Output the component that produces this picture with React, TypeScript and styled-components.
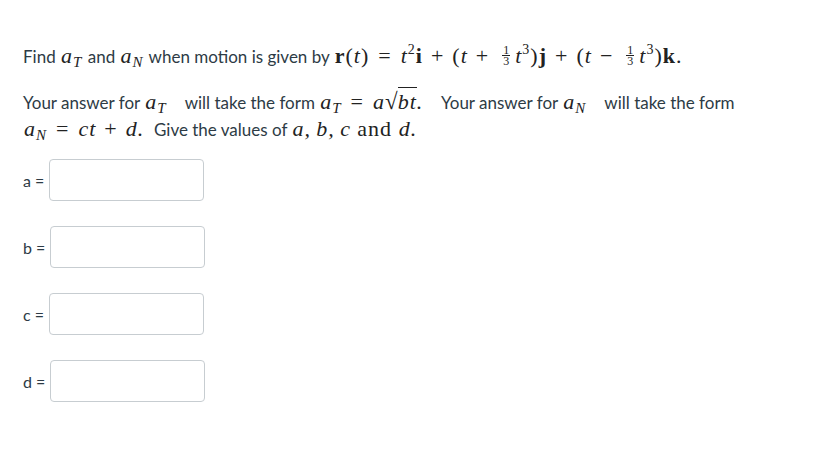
import React from "react";
import styled, { createGlobalStyle } from "styled-components";

const Global = createGlobalStyle`
  html, body { margin: 0; padding: 0; background: #fff; }
  body { font-family: Lato, "Open Sans", sans-serif; color: #2d3b45; }
`;

const Page = styled.div`
  padding: 43px 23px 0 23px;
  width: 790px;
  box-sizing: border-box;
`;

const Para = styled.p<{ $mt?: number }>`
  margin: ${(p) => p.$mt ?? 0}px 0 0 0;
  font-size: 17px;
  line-height: 27px;
  color: #2d3b45;
`;

const M = styled.span`
  font-family: "Liberation Serif", "DejaVu Serif", serif;
  font-size: 22px;
  line-height: 1;
  letter-spacing: 1px;
  font-style: italic;
  color: #222;
  margin: 0 1px;
`;

const R = styled.span`
  font-style: normal;
`;

const B = styled.span`
  font-style: normal;
  font-weight: bold;
`;

const Sub = styled.sub`
  font-size: 15px;
  vertical-align: -4px;
  line-height: 0;
`;

const Sup = styled.sup`
  font-size: 14px;
  vertical-align: 9px;
  line-height: 0;
  font-style: normal;
`;

const Rel = styled.span`
  font-style: normal;
  margin: 0 9px;
`;

const Bin = styled.span`
  font-style: normal;
  margin: 0 8px;
`;

const Frac = styled.span`
  display: inline-block;
  vertical-align: middle;
  text-align: center;
  font-style: normal;
  font-size: 12px;
  line-height: 10px;
  letter-spacing: 0;
  margin: -4px 5px 0 5px;
`;

const FracPart = styled.span<{ $bar?: boolean }>`
  display: block;
  padding: 0 1px;
  border-top: ${(p) => (p.$bar ? "1px solid #222" : "none")};
`;

const Sqrt = styled.span`
  font-style: normal;
  font-size: 23px;
  letter-spacing: 0;
`;

const Over = styled.span`
  border-top: 1px solid #222;
  padding-top: 1px;
  font-style: italic;
`;

const Fields = styled.div`
  display: flex;
  flex-direction: column;
  gap: 25px;
  margin-top: 16px;
`;

const Row = styled.div`
  display: flex;
  align-items: center;
  gap: 5px;
`;

const Label = styled.label`
  font-size: 16px;
  color: #2d3b45;
`;

const Input = styled.input`
  width: 155px;
  height: 42px;
  box-sizing: border-box;
  border: 1px solid #c7cdd1;
  border-radius: 4px;
  background: #fff;
  margin: 0;
`;

function F() {
  return (
    <Frac>
      <FracPart>1</FracPart>
      <FracPart $bar>3</FracPart>
    </Frac>
  );
}

export default function App() {
  return (
    <Page>
      <Global />
      <Para>
        Find <M>a<Sub>T</Sub></M> and <M>a<Sub>N</Sub></M> when motion is given by{" "}
        <M>
          <B>r</B><R>(</R>t<R>)</R><Rel>=</Rel>t<Sup>2</Sup><B>i</B><Bin>+</Bin><R>(</R>t<Bin>+</Bin>
          <F />t<Sup>3</Sup><R>)</R><B>j</B><Bin>+</Bin><R>(</R>t<Bin>−</Bin><F />t<Sup>3</Sup><R>)</R><B>k</B><R>.</R>
        </M>
      </Para>
      <Para $mt={19}>
        Your answer for <M>a<Sub>T</Sub></M>&nbsp;&nbsp;&nbsp; will take the form <M>a<Sub>T</Sub><Rel>=</Rel>a<Sqrt>√</Sqrt><Over>bt</Over>.</M>&nbsp;&nbsp;&nbsp; Your answer for <M>a<Sub>N</Sub></M>&nbsp;&nbsp;&nbsp; will take the form{" "}
        <M>a<Sub>N</Sub><Rel>=</Rel>ct<Bin>+</Bin>d.</M>&nbsp; Give the values of <M>a,&#8201;b,&#8201;c</M> <M><R>and</R> d.</M>
      </Para>
      <Fields>
        {["a", "b", "c", "d"].map((v) => (
          <Row key={v}>
            <Label>{v} =</Label>
            <Input type="text" aria-label={v} />
          </Row>
        ))}
      </Fields>
    </Page>
  );
}
